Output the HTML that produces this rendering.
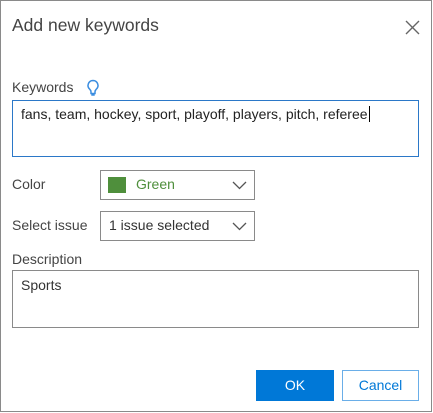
<!DOCTYPE html>
<html><head><style>
body{margin:0;width:433px;height:413px;background:#fff;font-family:"Liberation Sans",sans-serif;position:relative;overflow:hidden;color:#333}
.frame{position:absolute;left:0;top:0;width:430px;height:410px;border:1.5px solid #8a8a8a}
.a{position:absolute}
.lbl{font-size:14px;color:#444}
.box{position:absolute;border:1px solid #8a8a8a;box-sizing:border-box;background:#fff}
</style></head><body>
<div class="frame"></div>
<div class="a" style="left:12px;top:15px;font-size:17.5px;color:#444">Add new keywords</div>
<svg class="a" style="left:405px;top:20px" width="15" height="15"><path d="M1 1L14 14M14 1L1 14" stroke="#666" stroke-width="1.4"/></svg>
<div class="a lbl" style="left:12px;top:79px">Keywords</div>
<svg class="a" style="left:86px;top:79px" width="14" height="18"><path d="M7 1.5a5 5 0 0 0-3.2 8.8c.8.8 1.2 1.6 1.2 2.7v1.5h4v-1.5c0-1.1.4-1.9 1.2-2.7A5 5 0 0 0 7 1.5z M5.3 16h3.4" fill="none" stroke="#3a8de0" stroke-width="1.5"/></svg>
<div class="box" style="left:12px;top:100px;width:407px;height:57px;border-color:#2b78c8"></div>
<div class="a" style="left:21px;top:106px;font-size:14px;color:#222">fans, team, hockey, sport, playoff, players, pitch, referee<span style="border-left:1px solid #000;margin-left:1px"></span></div>
<div class="a lbl" style="left:12px;top:176px">Color</div>
<div class="box" style="left:100px;top:170px;width:155px;height:30px"></div>
<div class="a" style="left:108px;top:177px;width:18px;height:16px;background:#4f8f3c"></div>
<div class="a" style="left:136px;top:176px;font-size:14px;color:#4f8f3c">Green</div>
<svg class="a" style="left:232px;top:180px" width="15" height="10"><path d="M1 2l6.5 6.5L14 2" fill="none" stroke="#555" stroke-width="1.3"/></svg>
<div class="a lbl" style="left:12px;top:217px">Select issue</div>
<div class="box" style="left:100px;top:211px;width:155px;height:30px"></div>
<div class="a" style="left:109px;top:217px;font-size:14px;color:#333">1 issue selected</div>
<svg class="a" style="left:232px;top:221px" width="15" height="10"><path d="M1 2l6.5 6.5L14 2" fill="none" stroke="#555" stroke-width="1.3"/></svg>
<div class="a lbl" style="left:12px;top:251px">Description</div>
<div class="box" style="left:12px;top:270px;width:407px;height:58px"></div>
<div class="a" style="left:21px;top:277px;font-size:14px;color:#333">Sports</div>
<div class="a" style="left:256px;top:370px;width:78px;height:31px;background:#0078d7;color:#fff;font-size:14px;text-align:center;line-height:31px">OK</div>
<div class="box" style="left:342px;top:370px;width:77px;height:31px;border-color:#6aaee8;color:#0078d7;font-size:14px;text-align:center;line-height:29px">Cancel</div>
</body></html>
